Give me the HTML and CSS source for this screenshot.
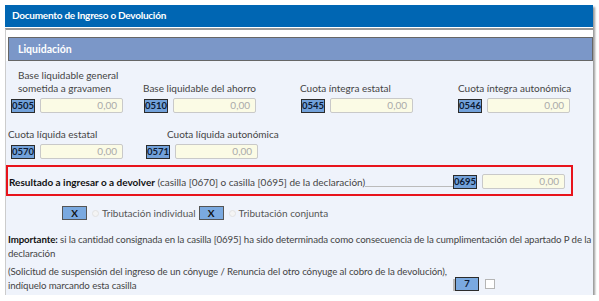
FILE: index.html
```html
<!DOCTYPE html>
<html lang="es">
<head>
<meta charset="utf-8">
<title>Documento de Ingreso o Devolución</title>
<link rel="stylesheet" href="styles.css">
</head>
<body>
<div class="panel">
  <div class="header">Documento de Ingreso o Devolución</div>
  <div class="body">
    <div class="section-title">Liquidación</div>
    <div class="content">
      <div class="row row1">
        <div class="field c1">
          <div class="label">Base liquidable general<br>sometida a gravamen</div>
          <div class="ctl"><span class="code">0505</span><span class="input">0,00</span></div>
        </div>
        <div class="field c2">
          <div class="label">Base liquidable del ahorro</div>
          <div class="ctl"><span class="code">0510</span><span class="input">0,00</span></div>
        </div>
        <div class="field c3">
          <div class="label">Cuota íntegra estatal</div>
          <div class="ctl"><span class="code">0545</span><span class="input">0,00</span></div>
        </div>
        <div class="field c4">
          <div class="label">Cuota íntegra autonómica</div>
          <div class="ctl"><span class="code">0546</span><span class="input">0,00</span></div>
        </div>
      </div>
      <div class="row row2">
        <div class="field d1">
          <div class="label">Cuota líquida estatal</div>
          <div class="ctl"><span class="code">0570</span><span class="input">0,00</span></div>
        </div>
        <div class="field d2">
          <div class="label">Cuota líquida autonómica</div>
          <div class="ctl"><span class="code">0571</span><span class="input">0,00</span></div>
        </div>
      </div>
      <div class="result">
        <div class="result-text"><b>Resultado a ingresar o a devolver</b> (casilla [0670] o casilla [0695] de la declaración)</div>
        <div class="leader"></div>
        <div class="ctl"><span class="code">0695</span><span class="input">0,00</span></div>
      </div>
      <div class="trib">
        <span class="xbtn">X</span><span class="radio"></span><span class="opt">Tributación individual</span>
        <span class="xbtn">X</span><span class="radio"></span><span class="opt">Tributación conjunta</span>
      </div>
      <p class="imp"><b>Importante:</b> si la cantidad consignada en la casilla [0695] ha sido determinada como consecuencia de la cumplimentación del apartado P de la<br>declaración</p>
      <div class="solic">
        <p class="solic-text">(Solicitud de suspensión del ingreso de un cónyuge / Renuncia del otro cónyuge al cobro de la devolución),<br>indíquelo marcando esta casilla</p>
        <span class="code code7">7</span><span class="check"></span>
      </div>
    </div>
  </div>
</div>
</body>
</html>
```
FILE: styles.css
```css
html, body { margin: 0; padding: 0; }
body {
  background: #ffffff;
  font-family: Lato, "Liberation Sans", sans-serif;
  font-size: 10px;
  color: #333;
}
.panel {
  margin: 5px 0 0 5px;
  width: 588px;
  height: 290px;
  background: #fff;
  box-shadow: 2px 2px 2px #9a9a9a;
  display: flex;
  flex-direction: column;
}
.header {
  height: 22px;
  line-height: 20px;
  background: #0066b3;
  color: #fff;
  font-weight: bold;
  font-size: 10px;
  letter-spacing: -0.25px;
  padding-left: 7px;
  border-bottom: 1px solid #fff;
}
.body {
  flex: 1;
  border-top: 2px solid #999;
  border-left: 1px solid #ccc;
  display: flex;
  flex-direction: column;
}
.section-title {
  margin: 7px 0 0 2px;
  height: 22px;
  line-height: 22px;
  border: 1px solid #666;
  background: #7b97c8;
  color: #fff;
  font-weight: bold;
  font-size: 10.5px;
  padding-left: 9px;
}
.content {
  flex: 1;
  background: #eff3fb;
  display: flex;
  flex-direction: column;
}
.row { display: flex; align-items: flex-end; }
.row1 { padding-top: 8px; padding-left: 5px; }
.row2 { padding-top: 15px; padding-left: 5px; }
.field { display: flex; flex-direction: column; }
.label { line-height: 13px; margin-bottom: 3px; color: #444; white-space: nowrap; }
.c1 { width: 133px; }
.c1 .label { padding-left: 7px; }
.c2 { width: 157px; }
.c2 .label { margin-left: -1px; }
.c3 { width: 157px; }
.c3 .label { margin-left: -1px; }
.d1 { width: 135px; }
.d1 .label { margin-left: -3px; }
.d2 .label { padding-left: 21px; }
.ctl { display: flex; align-items: center; }
.code {
  box-sizing: border-box;
  width: 24px;
  height: 14px;
  line-height: 12px;
  border: 1px solid #2b2b2b;
  background: #72a1da;
  color: #0c1a33;
  font-weight: bold;
  font-size: 9.5px;
  letter-spacing: 0;
  text-align: center;
}
.input {
  box-sizing: border-box;
  margin-left: 5px;
  width: 83px;
  height: 15px;
  line-height: 13px;
  border: 1px solid #c9c9c9;
  border-radius: 2px;
  background: #fbfbe5;
  color: #aaa;
  text-align: right;
  padding-right: 5px;
  font-size: 10px;
}
.result {
  margin-top: 6px;
  width: 567px;
  height: 31px;
  box-sizing: border-box;
  border: 2px solid #e8131b;
  display: flex;
  align-items: flex-end;
  padding: 0 6px 5px 1px;
}
.result-text { color: #444; line-height: 13px; white-space: nowrap; }
.result-text b { color: #111; }
.leader { flex: 1; border-bottom: 1px solid #bbb; margin-bottom: 2px; margin-right: -5px; }
.trib {
  margin-top: 10px;
  padding-left: 56px;
  display: flex;
  align-items: center;
  height: 14px;
}
.xbtn {
  box-sizing: border-box;
  width: 25px;
  height: 14px;
  line-height: 12px;
  border: 1px solid #555;
  background: #7aa9e0;
  color: #111;
  font-weight: bold;
  font-size: 10px;
  text-align: center;
}
.radio {
  box-sizing: border-box;
  width: 7px;
  height: 7px;
  border-radius: 50%;
  border: 1px solid #e2e2e2;
  background: #f4f4f4;
  margin: 0 3px 0 5px;
}
.opt { color: #555; margin-right: 3px; }
.imp {
  margin: 12px 0 0 2px;
  line-height: 14px;
  color: #444;
  font-size: 9.7px;
  letter-spacing: -0.1px;
  white-space: nowrap;
}
.imp b { color: #111; }
.solic {
  margin-top: 4px;
  display: flex;
  align-items: flex-end;
  padding-left: 2px;
}
.solic-text {
  margin: 0;
  line-height: 14px;
  width: 447px;
  color: #444;
  font-size: 9.7px;
  letter-spacing: -0.1px;
  white-space: nowrap;
}
.code7 { width: 24px; margin-bottom: 1px; box-shadow: -3px 1px 0 -1px #bbb; background: #7aa9e0; }
.check {
  box-sizing: border-box;
  width: 10px;
  height: 10px;
  border: 1px solid #b5b5b5;
  background: #fff;
  margin: 0 0 3px 6px;
}
```
